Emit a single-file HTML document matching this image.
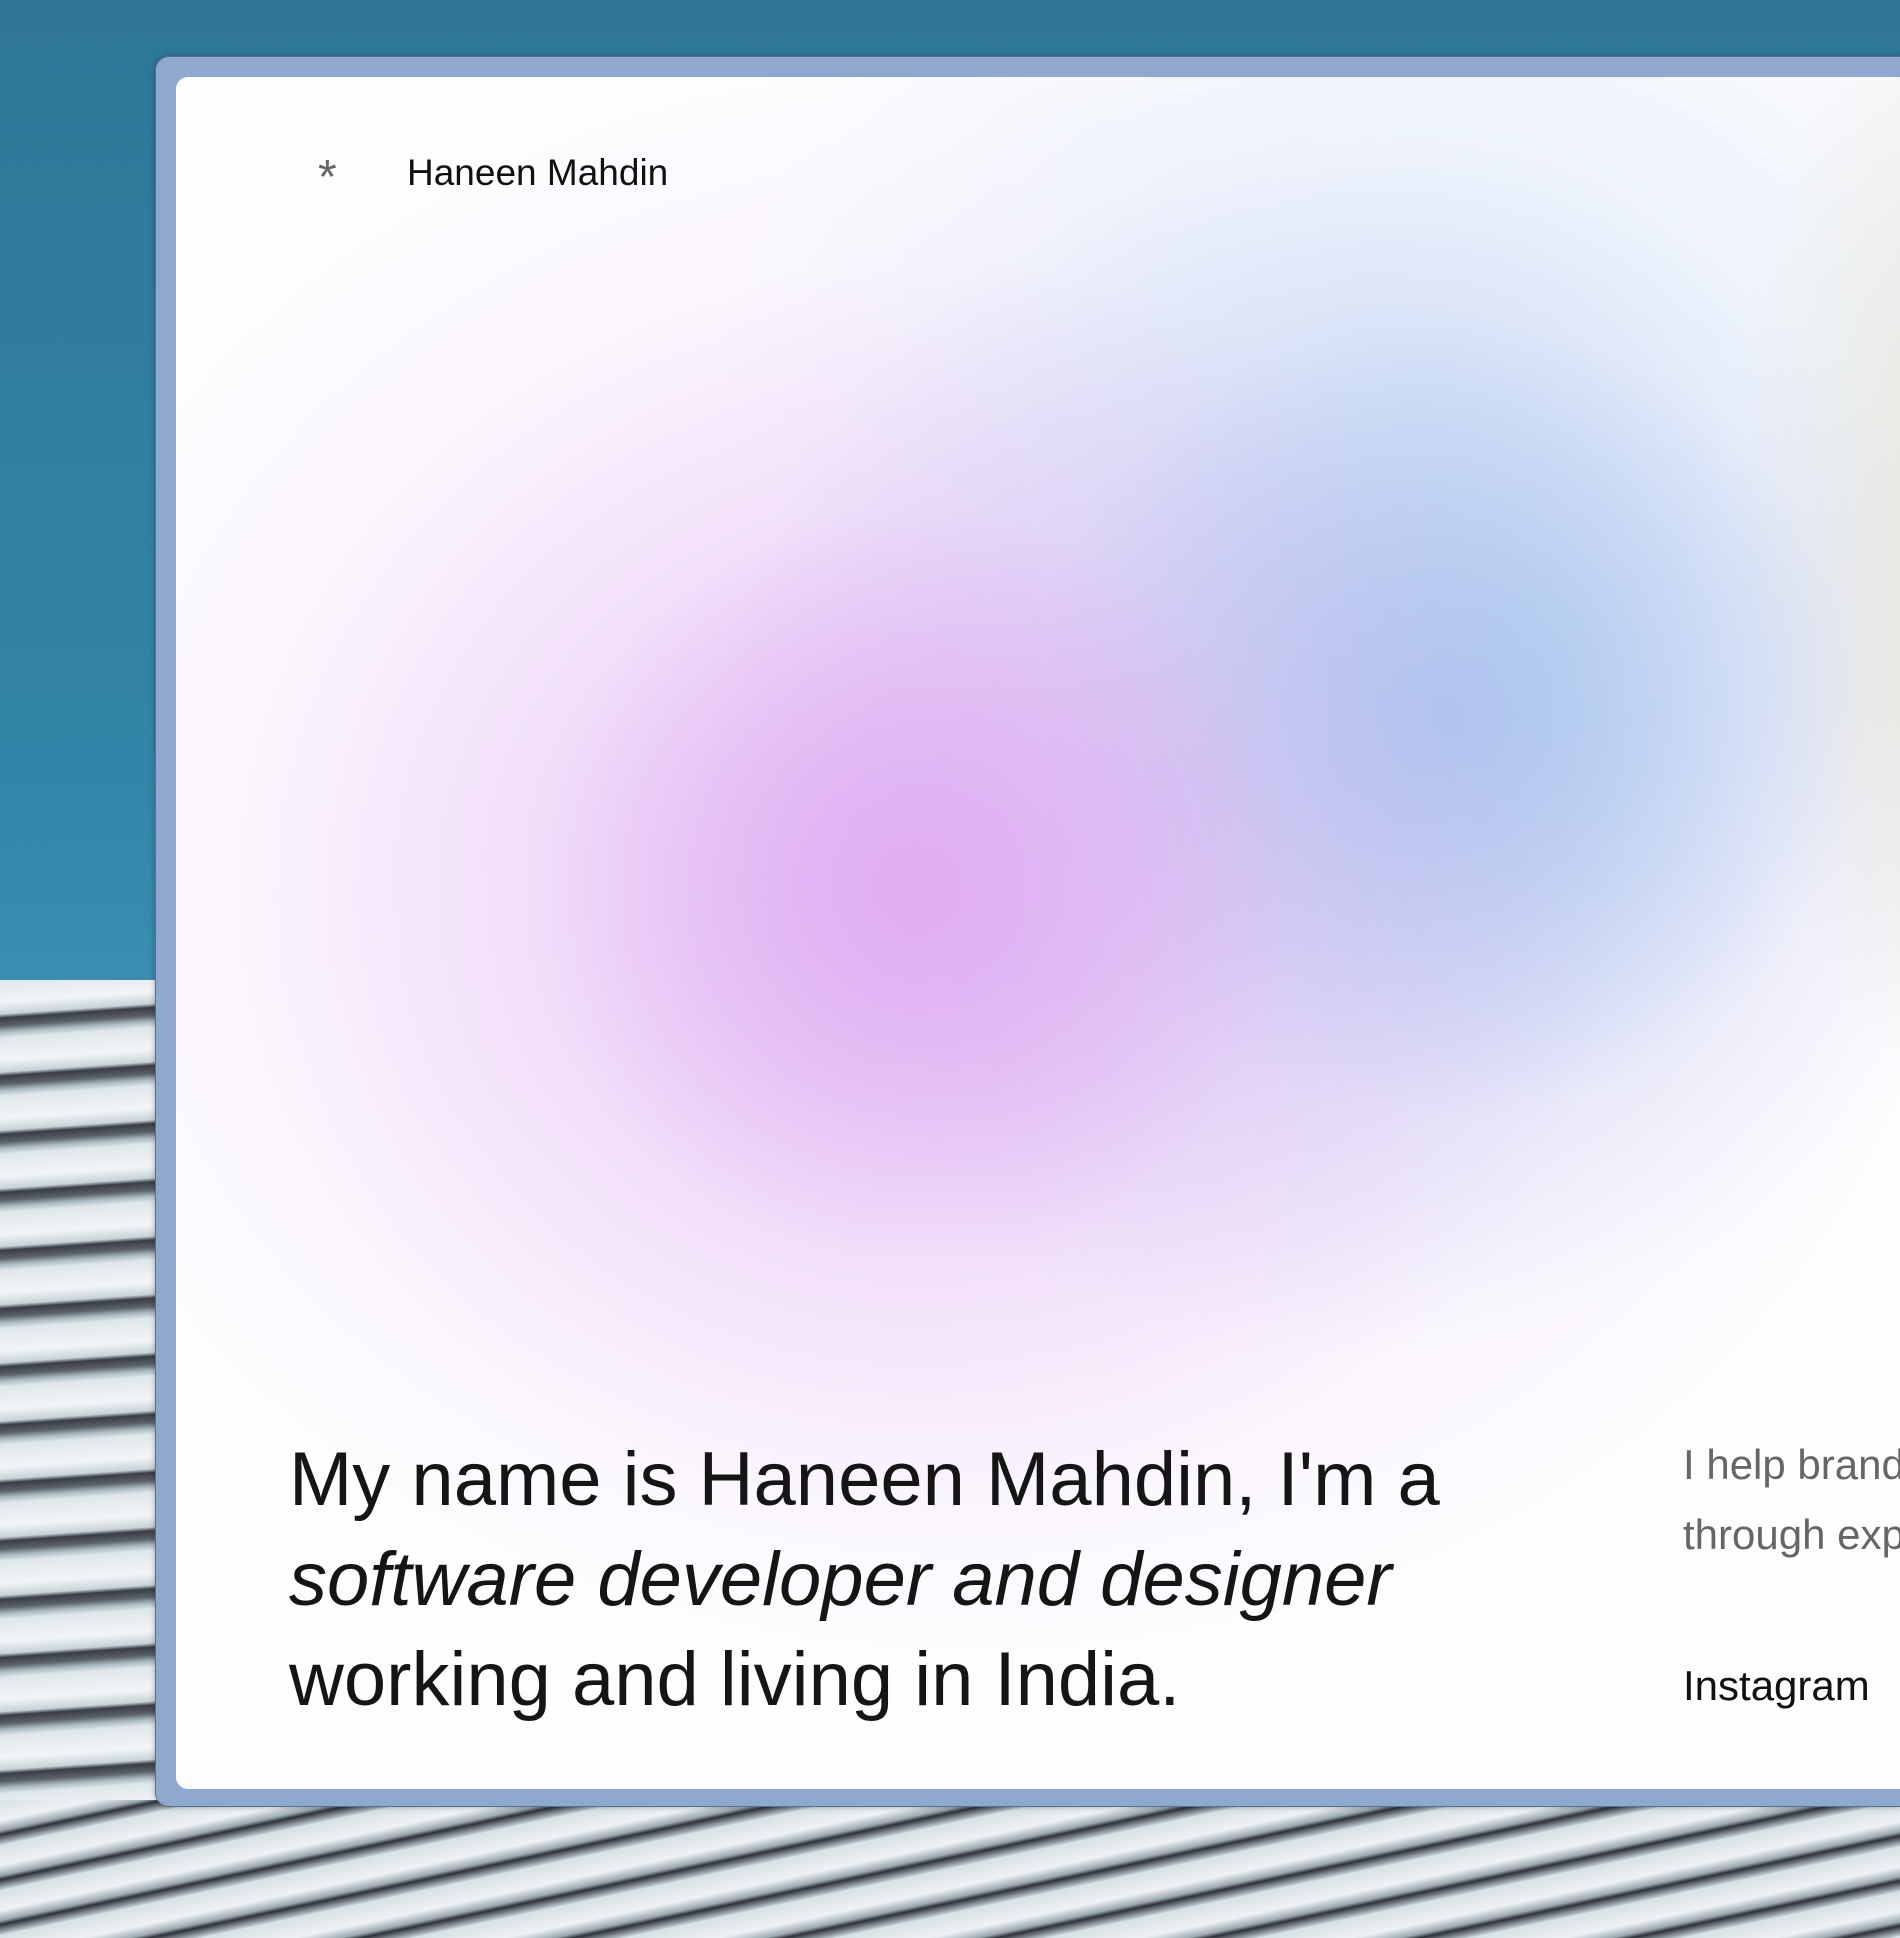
<!DOCTYPE html>
<html><head><meta charset="utf-8"><style>
html,body{margin:0;padding:0;width:1900px;height:1938px;overflow:hidden;}
body{position:relative;font-family:"Liberation Sans",sans-serif;
background:linear-gradient(180deg,#2f7696 0%,#3285a8 40%,#3a8db0 50%);}
.arch{position:absolute;left:0;top:980px;width:1900px;height:960px;
background:
repeating-linear-gradient(176deg,#dfe7ea 0px,#f2f5f6 22px,#c8d3d8 34px,#3a3e44 38px,#5a6168 46px,#a9b8c0 52px,#dfe7ea 58px);}
.arch2{position:absolute;left:0;top:1800px;width:1900px;height:140px;
background:repeating-linear-gradient(168deg,#d7e0e4 0px,#eef2f4 20px,#9aa8b0 30px,#2e3238 34px,#c4d0d6 44px);}
.frame{position:absolute;left:155px;top:56px;width:1745px;height:1751px;background:#8ea9cd;border-radius:14px 0 0 14px;border:1px solid #56718f;border-right:none;box-shadow:0 0 6px rgba(0,0,0,.3);box-sizing:border-box;}
.card{position:absolute;left:176px;top:77px;width:1724px;height:1712px;border-radius:12px 0 0 12px;overflow:hidden;
background:
radial-gradient(ellipse 380px 380px at 740px 810px,rgba(222,170,242,.9),rgba(222,170,242,0) 100%),
radial-gradient(ellipse 700px 640px at 740px 820px,rgba(228,190,244,.85),rgba(236,210,248,0) 100%),
radial-gradient(ellipse 420px 400px at 1270px 640px,rgba(160,194,236,.85),rgba(160,194,236,0) 100%),
radial-gradient(ellipse 640px 600px at 1180px 680px,rgba(176,194,238,.7),rgba(176,190,240,0) 100%),
radial-gradient(ellipse 700px 500px at 1250px 280px,rgba(215,230,248,.7),rgba(215,230,248,0) 100%),
radial-gradient(ellipse 300px 600px at 1850px 450px,rgba(226,220,195,.9),rgba(226,218,190,0) 100%),
radial-gradient(ellipse 1000px 820px at 800px 780px,rgba(246,232,252,.95),rgba(246,232,252,0) 100%),
#fdfcfe;}
.star{position:absolute;left:318px;top:150px;font-size:48px;color:#666;}
.name{position:absolute;left:407px;top:152px;font-size:37px;color:#111;}
.head{position:absolute;left:289px;top:1430px;font-size:76px;line-height:100px;color:#151515;margin:0;white-space:nowrap;}
.head i{font-style:italic;}
.side{position:absolute;left:1683px;top:1430px;font-size:42px;line-height:70px;color:#666;white-space:nowrap;}
.insta{position:absolute;left:1683px;top:1662px;font-size:42px;color:#111;}
</style></head><body>
<div class="arch"></div><div class="arch2"></div>
<div class="frame"></div>
<div class="card"></div>
<div class="star">*</div>
<div class="name">Haneen Mahdin</div>
<p class="head">My name is Haneen Mahdin, I'm a<br><i>software developer and designer</i><br>working and living in India.</p>
<div class="side" style="width:217px;overflow:hidden">I help brands grow<br>through experiences</div>
<div class="insta">Instagram</div>
</body></html>
